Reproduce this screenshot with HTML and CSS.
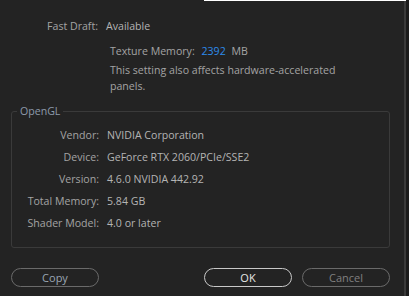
FILE: index.html
```html
<!DOCTYPE html>
<html lang="en">
<head>
    <meta charset="UTF-8">
    <title>GPU Information</title>
    <link rel="stylesheet" href="styles.css">
</head>
<body>
<div class="dialog">
    <div class="top-edge"></div>

    <div class="info">
        <div class="row">
            <span class="label">Fast Draft:</span>
            <span class="value">Available</span>
        </div>
        <div class="texture">
            <span class="label-inline">Texture Memory:</span>
            <span class="num">2392</span>
            <span class="label-inline">MB</span>
        </div>
        <p class="note">This setting also affects hardware-accelerated panels.</p>
    </div>

    <fieldset class="group">
        <legend>OpenGL</legend>
        <div class="row">
            <span class="label">Vendor:</span>
            <span class="value">NVIDIA Corporation</span>
        </div>
        <div class="row">
            <span class="label">Device:</span>
            <span class="value">GeForce RTX 2060/PCIe/SSE2</span>
        </div>
        <div class="row">
            <span class="label">Version:</span>
            <span class="value">4.6.0 NVIDIA 442.92</span>
        </div>
        <div class="row">
            <span class="label">Total Memory:</span>
            <span class="value">5.84 GB</span>
        </div>
        <div class="row">
            <span class="label">Shader Model:</span>
            <span class="value">4.0 or later</span>
        </div>
    </fieldset>

    <div class="buttons">
        <button class="btn copy">Copy</button>
        <div class="right-buttons">
            <button class="btn primary">OK</button>
            <button class="btn">Cancel</button>
        </div>
    </div>
</div>
</body>
</html>
```

FILE: styles.css
```css
html {
    background-color: #1b1b1b;
}
body {
    margin: 0;
    font-family: "Open Sans", "Noto Sans", sans-serif;
    font-size: 10.6px;
    color: #a3a3a3;
}
.dialog {
    width: 404px;
    height: 296px;
    background-color: #232323;
    border-right: 2px solid #3a3a3a;
}
.top-edge {
    margin-left: 204px;
    width: 202px;
    height: 1px;
    background-color: #ffffff;
}
.info {
    padding-top: 17px;
}
.row {
    display: flex;
    gap: 8px;
    line-height: 16px;
}
.label {
    width: 98px;
    text-align: right;
}
.value {
    color: #b4b4b4;
}
.texture {
    margin: 9px 0 0 110px;
    line-height: 16px;
}
.num {
    color: #2d8ceb;
    margin: 0 3px 0 4px;
}
.note {
    margin: 3px 0 0 110px;
    width: 235px;
    line-height: 16px;
}
.group {
    margin: 9px 0 0 11px;
    width: 379px;
    padding: 8px 0 16px 0;
    border: 1px solid #3a3a3a;
    border-radius: 3px;
    box-sizing: border-box;
    display: flex;
    flex-direction: column;
    gap: 6px;
}
.group legend {
    margin-left: 5px;
    padding: 0 3px;
    line-height: 16px;
    color: #8d9aab;
}
.group .label {
    width: 87px;
}
.buttons {
    display: flex;
    justify-content: space-between;
    margin: 20px 0 0 11px;
    width: 379px;
}
.right-buttons {
    display: flex;
    gap: 10px;
}
.btn {
    width: 88px;
    height: 19px;
    padding: 0;
    border: 1px solid #6a6a6a;
    border-radius: 10px;
    background-color: transparent;
    font-family: inherit;
    font-size: 11px;
    color: #808080;
}
.copy {
    color: #9aa6b4;
}
.primary {
    border-color: #c8c8c8;
    color: #e6e6e6;
}
```
